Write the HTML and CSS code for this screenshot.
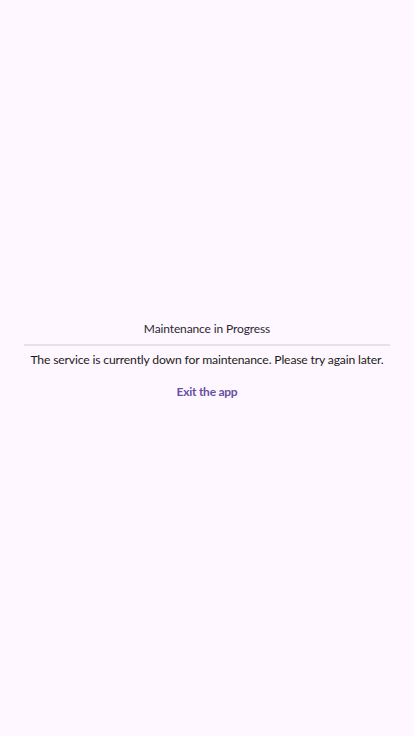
FILE: index.html
```html
<!DOCTYPE html>
<html lang="en">
<head>
<meta charset="utf-8">
<link rel="stylesheet" href="styles.css">
</head>
<body>
<main class="screen">
  <section class="dialog">
    <h1 class="title">Maintenance in Progress</h1>
    <hr class="divider">
    <p class="message">The service is currently down for maintenance. Please try again later.</p>
    <button class="exit" type="button">Exit the app</button>
  </section>
</main>
</body>
</html>
```
FILE: styles.css
```css
html, body {
  margin: 0;
  padding: 0;
  background: #fef7ff;
}
.screen {
  height: 736px;
  box-sizing: border-box;
  padding-bottom: 16px;
  display: flex;
  align-items: center;
  justify-content: center;
  font-family: Lato, "Noto Sans", sans-serif;
  color: #1d1b20;
}
.dialog {
  width: 366px;
  display: flex;
  flex-direction: column;
  align-items: center;
}
.title {
  margin: 0;
  font-size: 12px;
  font-weight: 400;
  line-height: 18px;
  letter-spacing: -0.12px;
  color: #2a2830;
}
.divider {
  width: 100%;
  border: 0;
  height: 2px;
  background: #e7e0ea;
  margin: 6px 0 5px;
}
.message {
  margin: 0;
  font-size: 12.2px;
  line-height: 18px;
  letter-spacing: -0.17px;
  white-space: nowrap;
}
.exit {
  margin-top: 14px;
  background: none;
  border: 0;
  padding: 0;
  font-family: inherit;
  font-size: 12px;
  font-weight: 700;
  line-height: 18px;
  letter-spacing: -0.25px;
  color: #6750a4;
}
```
